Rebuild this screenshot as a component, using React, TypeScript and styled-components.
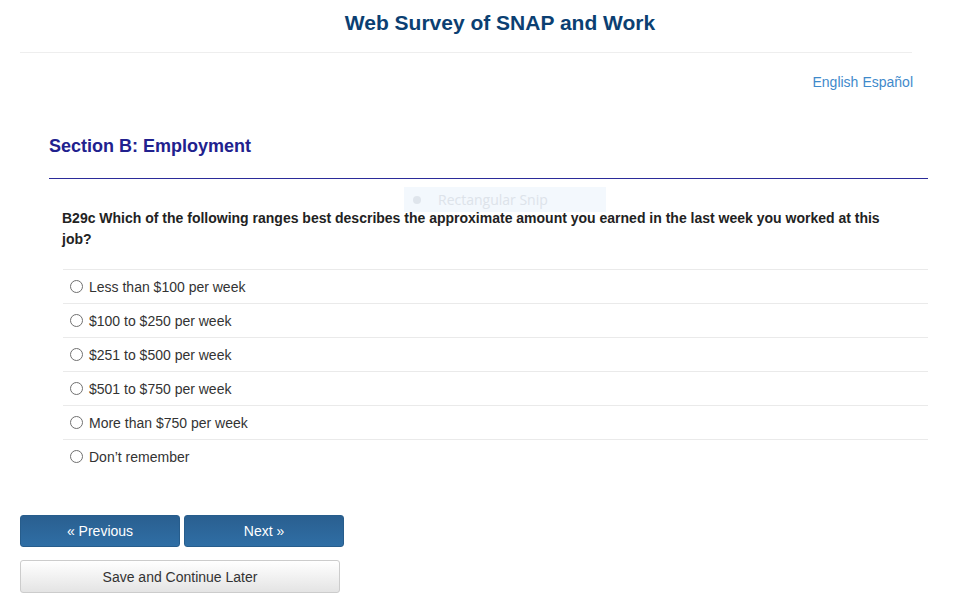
import React, { useState } from 'react';
import styled, { createGlobalStyle } from 'styled-components';

const GlobalStyle = createGlobalStyle`
  html, body {
    margin: 0;
    padding: 0;
    background: #ffffff;
    font-family: "Liberation Sans", Arial, sans-serif;
  }
`;

const Page = styled.div`
  width: 956px;
  height: 610px;
  position: relative;
  overflow: hidden;
`;

const Header = styled.div`
  margin: 0 44px 0 20px;
  padding-top: 11px;
  height: 41px;
  border-bottom: 1px solid #eeeeee;
  text-align: center;
`;

const Title = styled.h1`
  margin: 0;
  font-size: 21px;
  line-height: 24px;
  font-weight: bold;
  color: #0b3f72;
  padding-left: 68px;
`;

const LangBar = styled.div`
  display: flex;
  justify-content: flex-end;
  gap: 4px;
  padding: 21px 43px 0 0;
  font-size: 14px;
  line-height: 17px;
`;

const LangLink = styled.a`
  color: #3f8acb;
  text-decoration: none;
  cursor: pointer;
`;

const Content = styled.div`
  margin: 0 28px 0 49px;
  padding-top: 45px;
`;

const SectionTitle = styled.h2`
  margin: 0;
  font-size: 18px;
  line-height: 21px;
  font-weight: bold;
  color: #21218e;
  padding-bottom: 21px;
  border-bottom: 1px solid #2b2b99;
`;

const Question = styled.div`
  padding: 29px 0 0 13px;
  width: 826px;
  font-size: 14px;
  line-height: 21px;
  font-weight: bold;
  color: #222222;
`;

const Options = styled.div`
  margin: 19px 0 0 14px;
  display: flex;
  flex-direction: column;
`;

const OptionRow = styled.label`
  display: flex;
  align-items: center;
  height: 33px;
  border-top: 1px solid #eaeaea;
  font-size: 14px;
  color: #333333;
  cursor: pointer;
`;

const Radio = styled.span<{ checked: boolean }>`
  width: 11px;
  height: 11px;
  margin: 0 6px 0 7px;
  border-radius: 50%;
  border: 1px solid #707070;
  background: #ffffff;
  box-sizing: content-box;
  display: inline-flex;
  align-items: center;
  justify-content: center;
  &::after {
    content: '';
    width: 5px;
    height: 5px;
    border-radius: 50%;
    background: ${(p) => (p.checked ? '#333' : 'transparent')};
  }
`;

const Footer = styled.div`
  padding: 42px 0 0 20px;
  display: flex;
  flex-direction: column;
  gap: 13px;
`;

const NavRow = styled.div`
  display: flex;
  gap: 4px;
`;

const NavButton = styled.button`
  width: 160px;
  height: 32px;
  border: 1px solid #275d8c;
  border-radius: 3px;
  background: linear-gradient(#2a5f90, #2f6ea5);
  color: #ffffff;
  font-family: "Liberation Sans", Arial, sans-serif;
  font-size: 14px;
  cursor: pointer;
`;

const SaveButton = styled.button`
  width: 320px;
  height: 33px;
  border: 1px solid #cccccc;
  border-radius: 3px;
  background: linear-gradient(#ffffff, #e4e4e4);
  color: #333333;
  font-family: "Liberation Sans", Arial, sans-serif;
  font-size: 14px;
  cursor: pointer;
`;

const SnipHint = styled.div`
  position: absolute;
  left: 404px;
  top: 187px;
  width: 202px;
  height: 25px;
  background: #f3f8fd;
  display: flex;
  align-items: center;
  font-family: "Segoe UI", "Open Sans", sans-serif;
  font-size: 14px;
  color: #dde3ea;
  pointer-events: none;
`;

const SnipDot = styled.span`
  width: 8px;
  height: 8px;
  border-radius: 50%;
  background: #dfe5ec;
  margin: 0 17px 0 9px;
`;

const options = [
  'Less than $100 per week',
  '$100 to $250 per week',
  '$251 to $500 per week',
  '$501 to $750 per week',
  'More than $750 per week',
  'Don’t remember',
];

const App = () => {
  const [selected, setSelected] = useState<number | null>(null);

  return (
    <Page>
      <GlobalStyle />
      <Header>
        <Title>Web Survey of SNAP and Work</Title>
      </Header>
      <LangBar>
        <LangLink>English</LangLink>
        <LangLink>Español</LangLink>
      </LangBar>
      <Content>
        <SectionTitle>Section B: Employment</SectionTitle>
        <Question>
          B29c Which of the following ranges best describes the approximate amount you earned in
          the last week you worked at this job?
        </Question>
        <Options>
          {options.map((o, i) => (
            <OptionRow key={o} onClick={() => setSelected(i)}>
              <Radio checked={selected === i} />
              {o}
            </OptionRow>
          ))}
        </Options>
      </Content>
      <Footer>
        <NavRow>
          <NavButton>« Previous</NavButton>
          <NavButton>Next »</NavButton>
        </NavRow>
        <SaveButton>Save and Continue Later</SaveButton>
      </Footer>
      <SnipHint>
        <SnipDot />
        Rectangular Snip
      </SnipHint>
    </Page>
  );
};

export default App;
